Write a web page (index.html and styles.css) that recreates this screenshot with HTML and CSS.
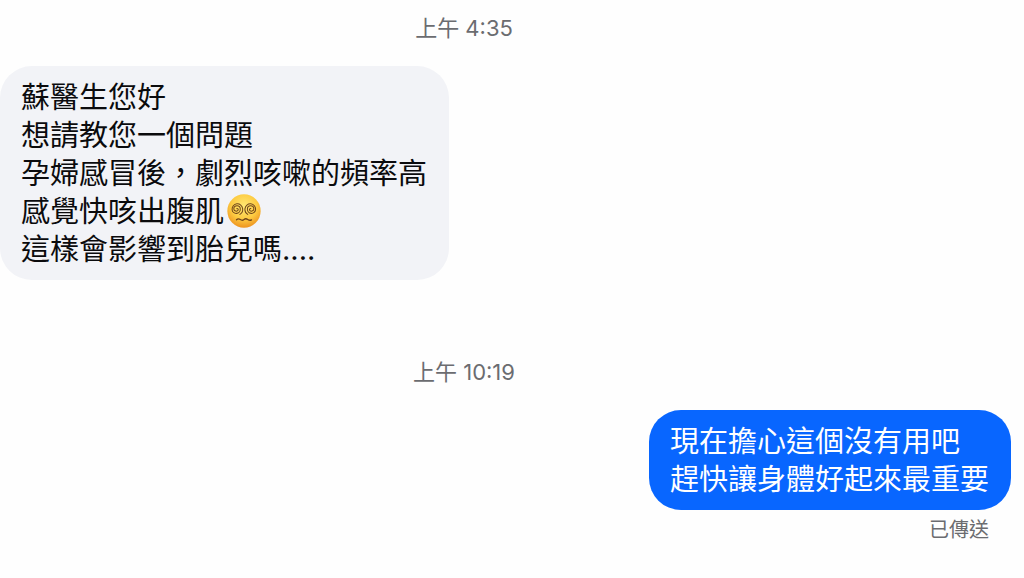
FILE: index.html
```html
<!DOCTYPE html>
<html lang="zh-Hant">
<head>
<meta charset="utf-8">
<meta name="viewport" content="width=device-width, initial-scale=1">
<title>訊息</title>
<link rel="stylesheet" href="styles.css">
</head>
<body>
<main class="thread">
  <time class="timestamp" datetime="04:35">上午 4:35</time>
  <p class="bubble bubble-in">蘇醫生您好<br>想請教您一個問題<br>孕婦感冒後，劇烈咳嗽的頻率高<br>感覺快咳出腹肌<svg class="emoji" viewBox="0 0 100 100" role="img" aria-label="頭暈">
      <defs>
        <radialGradient id="face" cx="50%" cy="35%" r="65%">
          <stop offset="0" stop-color="#ffe873"/>
          <stop offset="0.6" stop-color="#fdcb42"/>
          <stop offset="1" stop-color="#ee9420"/>
        </radialGradient>
      </defs>
      <circle cx="50" cy="50" r="49" fill="url(#face)"/>
      <g fill="none" stroke="#70451a" stroke-width="3" stroke-linecap="round">
        <path d="M29 43a3.500 3.500 0 0 1 4 4a7 7 0 0 1 -13 -3a9.500 9.500 0 0 1 19 0a12 12 0 0 1 -24 2a15 15 0 0 1 31 -3a17 17 0 0 1 -8 17"/>
        <path d="M70 43a3.500 3.500 0 0 0 -4 4a7 7 0 0 0 13 -3a9.500 9.500 0 0 0 -19 0a12 12 0 0 0 24 2a15 15 0 0 0 -31 -3a17 17 0 0 0 8 17"/>
        <path stroke-width="4" d="M28 76q5 -5 11 -1t11 0t11 0t11 1"/>
      </g>
    </svg><br>這樣會影響到胎兒嗎....</p>
  <time class="timestamp timestamp-later" datetime="10:19">上午 10:19</time>
  <p class="bubble bubble-out">現在擔心這個沒有用吧<br>趕快讓身體好起來最重要</p>
  <p class="status">已傳送</p>
</main>
</body>
</html>
```
FILE: styles.css
```css
body {
  margin: 0;
  background: #fefefe;
  font-family: Inter, "Noto Sans CJK TC", sans-serif;
}

.thread {
  display: flex;
  flex-direction: column;
  padding: 12px 13px 24px 0;
}

.timestamp {
  align-self: center;
  margin-right: 83px;
  font-size: 22px;
  line-height: 32px;
  color: #6b6c70;
}

.timestamp-later {
  margin-top: 76px;
}

.bubble {
  margin: 22px 0 0;
  padding: 13px 22px 11px 21px;
  border-radius: 32px;
  font-size: 29px;
  line-height: 38px;
}

.bubble-in {
  align-self: flex-start;
  background: #f2f3f7;
  color: #0b0b0d;
}

.bubble-out {
  align-self: flex-end;
  background: #0866ff;
  color: #fff;
}

.emoji {
  width: 34px;
  height: 34px;
  margin-left: 3px;
  vertical-align: -6px;
}

.status {
  align-self: flex-end;
  margin: 5px 22px 0 0;
  font-size: 20px;
  line-height: 30px;
  color: #6b6c70;
}
```
